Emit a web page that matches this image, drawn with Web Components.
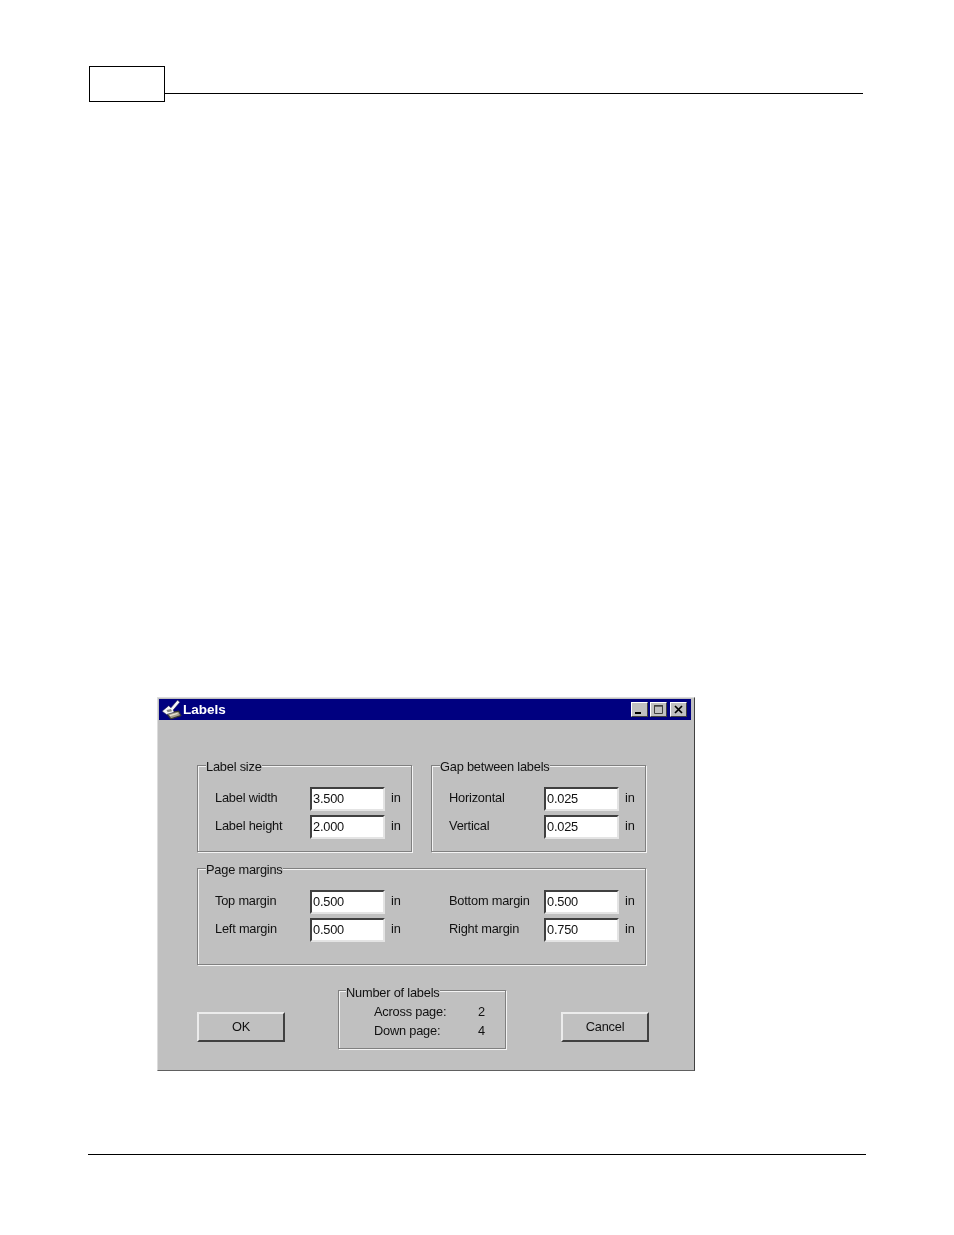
<!DOCTYPE html>
<html>
<head>
<meta charset="utf-8">
<title>Labels</title>
<style>
  html, body { margin: 0; padding: 0; background: #fff; }
</style>
</head>
<body>
<manual-page>
  <win-dialog heading="Labels">
    <div style="display:flex;gap:19px">
      <group-box heading="Label size" style="width:215px;height:87px">
        <field-row label="Label width" value="3.500"></field-row>
        <field-row label="Label height" value="2.000"></field-row>
      </group-box>
      <group-box heading="Gap between labels" style="width:215px;height:87px">
        <field-row label="Horizontal" value="0.025"></field-row>
        <field-row label="Vertical" value="0.025"></field-row>
      </group-box>
    </div>
    <group-box heading="Page margins" columns="2" style="width:449px;height:97px;margin-top:16px">
      <field-row label="Top margin" value="0.500"></field-row>
      <field-row label="Bottom margin" value="0.500"></field-row>
      <field-row label="Left margin" value="0.500"></field-row>
      <field-row label="Right margin" value="0.750"></field-row>
    </group-box>
    <div style="display:flex;justify-content:space-between;align-items:flex-end;width:452px;margin-top:25px">
      <win-button>OK</win-button>
      <count-box heading="Number of labels" style="width:168px;height:59px;margin-right:2px">
        <count-row label="Across page:" value="2"></count-row>
        <count-row label="Down page:" value="4"></count-row>
      </count-box>
      <win-button>Cancel</win-button>
    </div>
  </win-dialog>
</manual-page>

<script>
// Page frame: header box + rule, content slot, footer rule
class ManualPage extends HTMLElement {
  constructor() {
    super();
    this.attachShadow({ mode: "open" });
    this.shadowRoot.innerHTML = `
      <style>
      :host { display: block; padding: 66px 0 0 88px; }
      .head { display: flex; width: 774px; margin-left: 1px; height: 36px; }
      .box { width: 74px; height: 34px; border: 1px solid #000; background: #fff; }
      .rule { flex: 1; height: 1px; background: #000; margin-top: 27px; }
      .body { margin: 595px 0 0 69px; }
      .foot { width: 778px; height: 1px; background: #000; margin-top: 83px; }
      </style>
      <div class="head"><div class="box"></div><div class="rule"></div></div>
      <div class="body"><slot></slot></div>
      <div class="foot"></div>
    `;
  }
}
customElements.define("manual-page", ManualPage);

// Win95 style dialog window
class WinDialog extends HTMLElement {
  constructor() {
    super();
    this.attachShadow({ mode: "open" });
    this.shadowRoot.innerHTML = `
      <style>
      :host {
        display: block;
        box-sizing: border-box;
        width: 538px;
        height: 374px;
        padding: 1px 3px 0 1px;
        background: #c0c0c0;
        border: 1px solid;
        border-color: #dcdcdc #404040 #606060 #dcdcdc;
        font-family: "Liberation Sans", sans-serif;
        font-size: 12.8px;
        letter-spacing: -0.2px;
        color: #111;
        filter: blur(0.35px);
      }
      .title {
        display: flex;
        align-items: center;
        height: 21px;
        background: #000080;
        color: #fff;
        font-weight: bold;
        font-size: 13.5px;
        letter-spacing: 0;
        padding: 0 4px 0 2px;
      }
      .title > svg { width: 21px; height: 21px; margin-right: 1px; }
      .title span { flex: 1; }
      .ctl {
        box-sizing: border-box;
        width: 17px;
        height: 15px;
        background: #c0c0c0;
        border: 1px solid;
        border-color: #fff #404040 #404040 #fff;
        display: flex;
        align-items: center;
        justify-content: center;
      }
      .ctl svg { width: 11px; height: 11px; }
      .ctl.max { margin: 0 3px 0 2px; }
      .content { padding: 45px 0 0 38px; }
      </style>
      <div class="title">
        <svg viewBox="0 0 19 19">
          <path d="M5 13l11-2 2 4-9 3z" fill="#a8a08c" stroke="#383830" stroke-width="1"/>
          <path d="M8 15l7-2" stroke="#e8e4d4" stroke-width="1.2" fill="none"/>
          <path d="M1 11l6-5 2 2 6-7 2 2-6 7 1 2-7 2z" fill="#f8f8f8" stroke="#20204a" stroke-width="0.5"/>
          <path d="M5 10l4-1 1 2-4 1z" fill="#8c8c84"/>
        </svg>
        <span id="heading"></span>
        <div class="ctl"><svg viewBox="0 0 11 11"><path d="M1 8h6v2H1z" fill="#000"/></svg></div>
        <div class="ctl max"><svg viewBox="0 0 11 11"><path d="M1.5 1.5h8v8h-8z" fill="none" stroke="#404040"/><path d="M1 2h9" stroke="#404040" stroke-width="1.4"/></svg></div>
        <div class="ctl"><svg viewBox="0 0 11 11"><path d="M2 2l7 7M9 2l-7 7" fill="none" stroke="#000" stroke-width="1.7"/></svg></div>
      </div>
      <div class="content"><slot></slot></div>
    `;
  }
  connectedCallback() {
    this.shadowRoot.querySelector("#heading").textContent = this.getAttribute("heading");
  }
}
customElements.define("win-dialog", WinDialog);

// Etched group box, one or two columns of rows
class GroupBox extends HTMLElement {
  constructor() {
    super();
    this.attachShadow({ mode: "open" });
    this.shadowRoot.innerHTML = `
      <style>
      :host {
        display: block;
        position: relative;
        box-sizing: border-box;
        border: 1px solid #808080;
        box-shadow: 1px 1px 0 #f4f4f4, inset 1px 1px 0 #f4f4f4;
      }
      .legend {
        position: absolute;
        top: -7px;
        left: 8px;
        background: #c0c0c0;
        line-height: 16px;
      }
      .rows {
        display: grid;
        grid-template-columns: 1fr;
        row-gap: 4px;
        padding: 21px 0 0 17px;
      }
      :host([columns="2"]) .rows { grid-template-columns: 234px 1fr; }
      </style>
      <div class="legend" id="legend"></div>
      <div class="rows"><slot></slot></div>
    `;
  }
  connectedCallback() {
    this.shadowRoot.querySelector("#legend").textContent = this.getAttribute("heading");
  }
}
customElements.define("group-box", GroupBox);

// Label + sunken input + unit
class FieldRow extends HTMLElement {
  constructor() {
    super();
    this.attachShadow({ mode: "open" });
    this.shadowRoot.innerHTML = `
      <style>
      :host { display: flex; align-items: center; height: 24px; }
      .label { width: 95px; padding-bottom: 4px; }
      .input {
        box-sizing: border-box;
        width: 75px;
        height: 24px;
        line-height: 20px;
        padding-left: 1px;
        background: #fff;
        border: 2px solid;
        border-color: #404040 #e4e4e4 #e4e4e4 #404040;
      }
      .unit { margin-left: 6px; padding-bottom: 4px; }
      </style>
      <span class="label" id="label"></span>
      <span class="input" id="value"></span>
      <span class="unit">in</span>
    `;
  }
  connectedCallback() {
    this.shadowRoot.querySelector("#label").textContent = this.getAttribute("label");
    this.shadowRoot.querySelector("#value").textContent = this.getAttribute("value");
  }
}
customElements.define("field-row", FieldRow);

// Group box variant with read-only counts
class CountBox extends HTMLElement {
  constructor() {
    super();
    this.attachShadow({ mode: "open" });
    this.shadowRoot.innerHTML = `
      <style>
      :host {
        display: block;
        position: relative;
        box-sizing: border-box;
        border: 1px solid #808080;
        box-shadow: 1px 1px 0 #f4f4f4, inset 1px 1px 0 #f4f4f4;
      }
      .legend {
        position: absolute;
        top: -6px;
        left: 7px;
        background: #c0c0c0;
        line-height: 16px;
      }
      .rows { padding: 11px 0 0 35px; }
      </style>
      <div class="legend" id="legend"></div>
      <div class="rows"><slot></slot></div>
    `;
  }
  connectedCallback() {
    this.shadowRoot.querySelector("#legend").textContent = this.getAttribute("heading");
  }
}
customElements.define("count-box", CountBox);

class CountRow extends HTMLElement {
  constructor() {
    super();
    this.attachShadow({ mode: "open" });
    this.shadowRoot.innerHTML = `
      <style>
      :host { display: flex; height: 19px; line-height: 19px; }
      .label { width: 104px; }
      </style>
      <span class="label" id="label"></span>
      <span id="value"></span>
    `;
  }
  connectedCallback() {
    this.shadowRoot.querySelector("#label").textContent = this.getAttribute("label");
    this.shadowRoot.querySelector("#value").textContent = this.getAttribute("value");
  }
}
customElements.define("count-row", CountRow);

class WinButton extends HTMLElement {
  constructor() {
    super();
    this.attachShadow({ mode: "open" });
    this.shadowRoot.innerHTML = `
      <style>
      :host {
        display: flex;
        align-items: center;
        justify-content: center;
        box-sizing: border-box;
        width: 88px;
        height: 30px;
        margin-bottom: 7px;
        padding-bottom: 2px;
        border: 2px solid;
        border-color: #ececec #404040 #404040 #ececec;
      }
      </style>
      <slot></slot>
    `;
  }
}
customElements.define("win-button", WinButton);
</script>
</body>
</html>
